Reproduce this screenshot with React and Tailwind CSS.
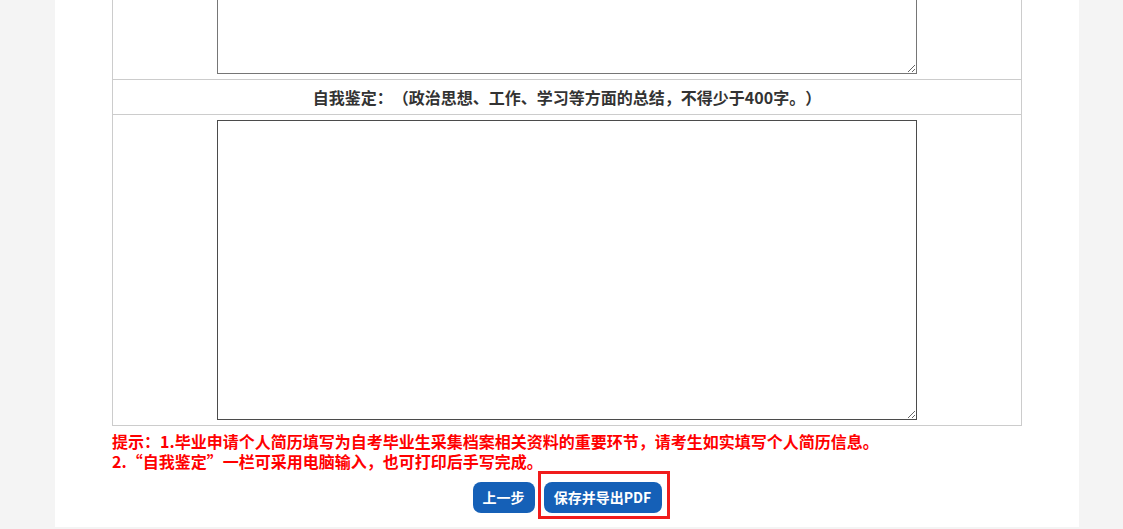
import React from 'react';

const CJK = "font-['Microsoft_YaHei','Noto_Sans_CJK_SC',sans-serif] [text-spacing-trim:space-all]";

const App = () => {
  return (
    <div className={`min-h-screen bg-[#f4f4f4] ${CJK}`}>
      {/* Panel */}
      <div className="ml-[55px] w-[1024px] bg-white px-[57px] pb-[14px] mb-px">
        {/* Form table */}
        <div className="border-x border-b border-[#cccccc]">
          {/* previous textarea (scrolled) */}
          <div className="pb-[5px] border-b border-[#cccccc]">
            <textarea className="block mx-auto w-[700px] h-[74px] border border-t-0 border-[#767676] bg-white" />
          </div>

          {/* Self assessment title */}
          <div className="h-[35px] flex items-center justify-center border-b border-[#cccccc] text-[16px] font-bold text-[#333333] leading-[20px]">
            自我鉴定：（政治思想、工作、学习等方面的总结，不得少于400字。）
          </div>

          <div className="py-[5px]">
            <textarea className="block mx-auto w-[700px] h-[300px] border border-[#4b4b4b] bg-white" />
          </div>
        </div>

        {/* Tips */}
        <div className="mt-[5px] text-[16px] font-bold text-[#ff0000] leading-[20px]">
          <p>提示：1.毕业申请个人简历填写为自考毕业生采集档案相关资料的重要环节，请考生如实填写个人简历信息。</p>
          <p>2.“自我鉴定”一栏可采用电脑输入，也可打印后手写完成。</p>
        </div>

        {/* Actions */}
        <div className="mt-[11px] flex justify-center gap-[9px]">
          <button className="h-[31px] w-[62px] rounded-[8px] bg-[#1560b7] text-white text-[14px] font-bold">
            上一步
          </button>
          <div className="relative">
            <button className="h-[31px] w-[118px] rounded-[8px] bg-[#1560b7] text-white text-[14px] font-bold">
              保存并导出PDF
            </button>
            <span className="absolute -left-[6px] -right-[8px] -top-[11px] -bottom-[6px] border-[3px] border-[#f01c1c] pointer-events-none" />
          </div>
        </div>
      </div>
    </div>
  );
};

export default App;
